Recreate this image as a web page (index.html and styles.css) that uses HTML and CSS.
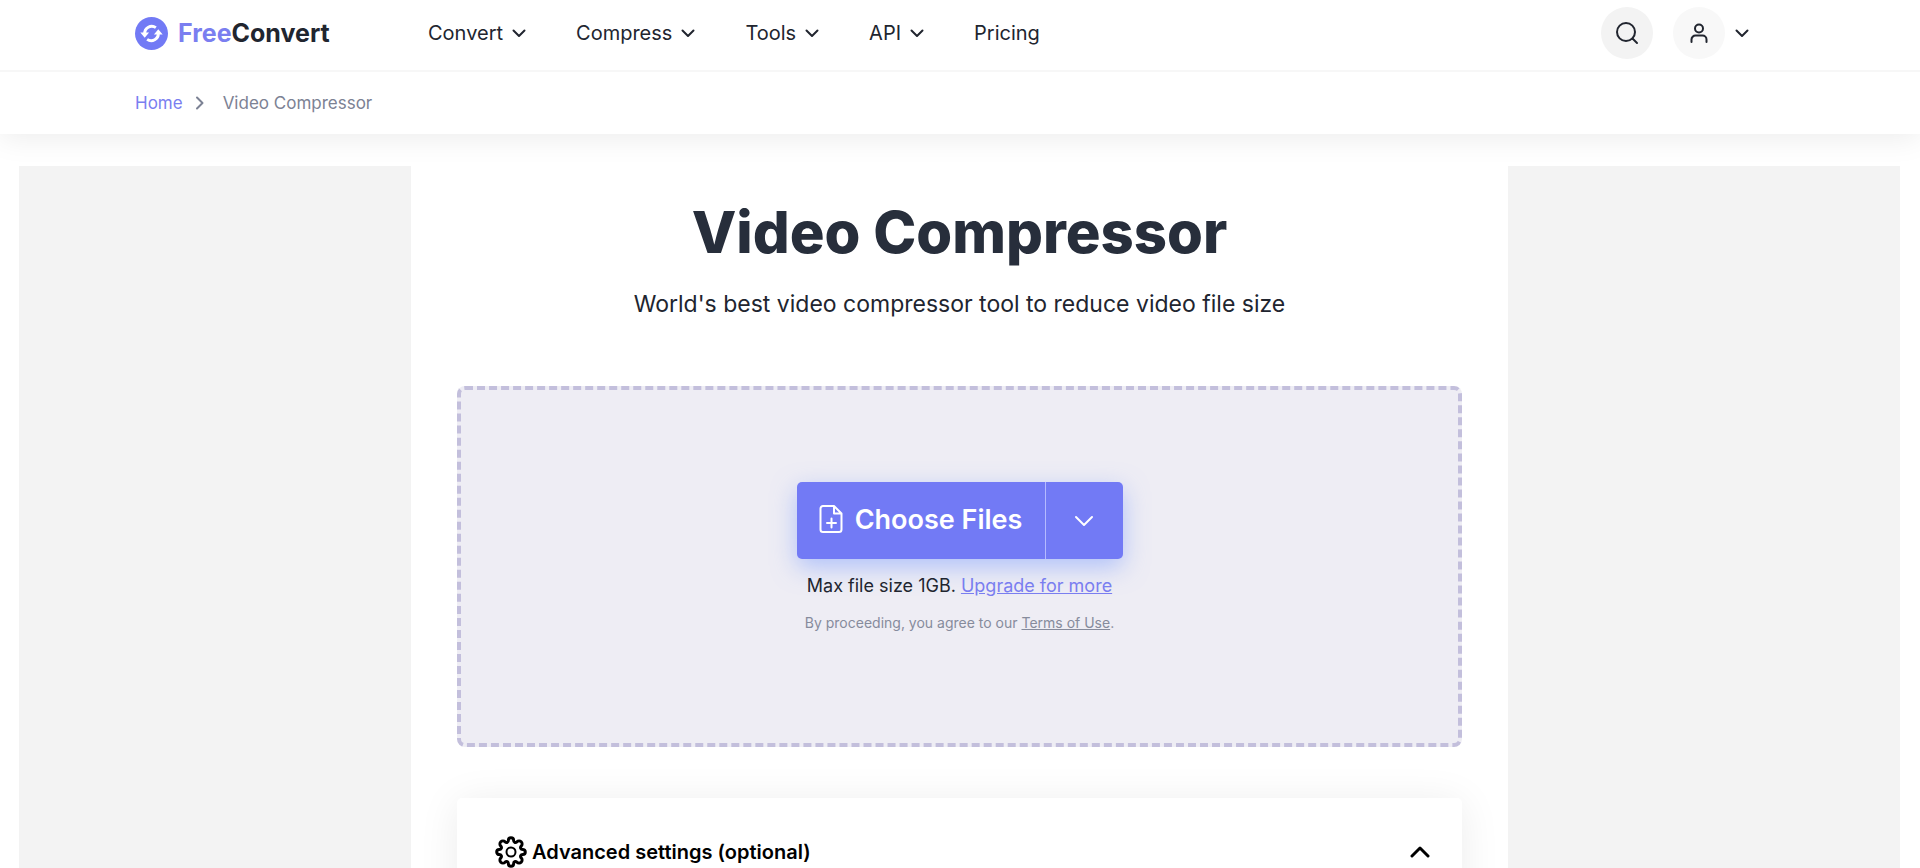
FILE: index.html
```html
<!DOCTYPE html>
<html lang="en">
<head>
    <meta charset="UTF-8">
    <meta name="viewport" content="width=device-width, initial-scale=1.0">
    <title>Video Compressor - FreeConvert</title>
    <link rel="stylesheet" href="styles.css">
</head>
<body>
    <header class="header">
        <a class="logo" href="#">
            <svg class="logo-mark" viewBox="0 0 34 34">
                <circle cx="17" cy="17" r="17" fill="#727af5"/>
                <path d="M10 17.500a7.300 7.300 0 0 1 11.500-6.500M24 16.500a7.300 7.300 0 0 1-11.500 6.500" fill="none" stroke="#fff" stroke-width="3"/>
                <path d="M5.500 16h9L10 21.500zM28.500 18h-9l4.500-5.500z" fill="#fff"/>
            </svg>
            <span class="logo-text"><span class="logo-free">Free</span>Convert</span>
        </a>
        <nav class="nav">
            <a href="#">Convert <svg class="chevron" viewBox="0 0 16 16"><path d="M2.500 5.500 8 11l5.500-5.500"/></svg></a>
            <a href="#">Compress <svg class="chevron" viewBox="0 0 16 16"><path d="M2.500 5.500 8 11l5.500-5.500"/></svg></a>
            <a href="#">Tools <svg class="chevron" viewBox="0 0 16 16"><path d="M2.500 5.500 8 11l5.500-5.500"/></svg></a>
            <a href="#">API <svg class="chevron" viewBox="0 0 16 16"><path d="M2.500 5.500 8 11l5.500-5.500"/></svg></a>
            <a href="#">Pricing</a>
        </nav>
        <div class="actions">
            <button class="round search" aria-label="Search">
                <svg viewBox="0 0 24 24"><circle cx="11" cy="11" r="9"/><path d="m17.500 17.500 4.500 4.500"/></svg>
            </button>
            <button class="account" aria-label="Account">
                <span class="round user">
                    <svg viewBox="0 0 24 24"><circle cx="12" cy="7.500" r="4"/><path d="M4.500 21v-2.500a4 4 0 0 1 4-4h7a4 4 0 0 1 4 4V21"/></svg>
                </span>
                <svg class="chevron" viewBox="0 0 16 16"><path d="M2.500 5.500 8 11l5.500-5.500"/></svg>
            </button>
        </div>
    </header>

    <nav class="breadcrumb" aria-label="Breadcrumb">
        <a href="#">Home</a>
        <svg class="crumb-arrow" viewBox="0 0 16 16"><path d="m5 2.500 5.500 5.500L5 13.500"/></svg>
        <span>Video Compressor</span>
    </nav>

    <div class="page">
        <aside class="ad"></aside>
        <main class="content">
            <h1>Video Compressor</h1>
            <p class="subtitle">World's best video compressor tool to reduce video file size</p>

            <section class="dropzone">
                <div class="choose">
                    <button class="choose-files">
                        <svg class="file-icon" viewBox="0 0 24 30"><path d="M15 2H4a2.500 2.500 0 0 0-2.500 2.500v21A2.500 2.500 0 0 0 4 28h16a2.500 2.500 0 0 0 2.500-2.500V9.500zM15 2v7.500h7.500M12.500 14.500v9M8 19h9"/></svg>
                        Choose Files
                    </button>
                    <button class="choose-more" aria-label="More sources">
                        <svg viewBox="0 0 20 20"><path d="m2 6 8 8 8-8"/></svg>
                    </button>
                </div>
                <p class="limit">Max file size 1GB. <a href="#">Upgrade for more</a></p>
                <p class="terms">By proceeding, you agree to our <a href="#">Terms of Use</a>.</p>
            </section>

            <section class="settings">
                <button class="settings-toggle">
                    <svg class="gear" viewBox="0 0 32 32">
                        <path d="M13.400 4.300a2.600 2.600 0 0 1 5.200 0c0 2 1.800 2.800 3.300 1.500a2.900 2.900 0 0 1 4.300 4.300c-1.300 1.500-.5 3.300 1.500 3.300a2.600 2.600 0 0 1 0 5.200c-2 0-2.800 1.800-1.500 3.300a2.900 2.900 0 0 1-4.300 4.300c-1.500-1.300-3.300-.5-3.300 1.500a2.600 2.600 0 0 1-5.200 0c0-2-1.800-2.800-3.300-1.500a2.900 2.900 0 0 1-4.300-4.300c1.300-1.500.5-3.300-1.500-3.300a2.600 2.600 0 0 1 0-5.200c2 0 2.800-1.800 1.500-3.300a2.900 2.900 0 0 1 4.300-4.300c1.500 1.300 3.300.5 3.300-1.500z"/>
                        <circle cx="16" cy="16" r="4.500"/>
                    </svg>
                    <span>Advanced settings (optional)</span>
                    <svg class="caret" viewBox="0 0 20 20"><path d="m2 14 8-8 8 8"/></svg>
                </button>
            </section>
        </main>
        <aside class="ad"></aside>
    </div>
</body>
</html>
```
FILE: styles.css
```css
* {
    box-sizing: border-box;
}
body {
    margin: 0;
    font-family: Inter, sans-serif;
    color: #21252f;
    background-color: #fff;
}
a {
    color: inherit;
    text-decoration: none;
}
button {
    padding: 0;
    border: none;
    background: none;
    color: inherit;
    font-family: inherit;
    cursor: pointer;
}
svg {
    display: block;
    flex: none;
    fill: none;
    stroke: currentColor;
    stroke-width: 2;
    stroke-linecap: round;
    stroke-linejoin: round;
}
.header {
    position: relative;
    z-index: 1;
    display: flex;
    align-items: center;
    height: 72px;
    padding: 0 170px 4px 135px;
    border-bottom: 2px solid #f7f7f7;
    background-color: #fff;
}
.logo {
    display: flex;
    align-items: center;
    gap: 10px;
    width: 293px;
    font-size: 25px;
    font-weight: 700;
}
.logo-mark {
    width: 33px;
    height: 33px;
    stroke: none;
    stroke-linecap: butt;
}
.logo-free {
    color: #7a7ef0;
}
.nav {
    display: flex;
    gap: 49px;
    font-size: 20px;
}
.nav a {
    display: flex;
    align-items: center;
    gap: 8px;
}
.chevron {
    width: 16px;
    height: 16px;
}
.actions {
    display: flex;
    gap: 20px;
    margin-left: auto;
}
.round {
    display: flex;
    align-items: center;
    justify-content: center;
    width: 52px;
    height: 52px;
    border-radius: 50%;
}
.search {
    background-color: #f3f3f3;
}
.search svg {
    width: 24px;
    height: 24px;
}
.account {
    display: flex;
    align-items: center;
    gap: 9px;
}
.user {
    background-color: #f8f8f8;
}
.user svg {
    width: 24px;
    height: 24px;
}
.breadcrumb {
    display: flex;
    align-items: center;
    height: 62px;
    padding: 0 135px;
    font-size: 17px;
    color: #7c8294;
    box-shadow: 0 4px 30px rgba(0, 0, 0, 0.08);
}
.breadcrumb a {
    color: #7a7ef0;
}
.crumb-arrow {
    width: 16px;
    height: 16px;
    margin: 0 15px 0 9px;
}
.page {
    display: flex;
    margin: 32px 20px 0 19px;
}
.ad {
    flex: none;
    width: 392px;
    background-color: #f3f3f3;
}
.content {
    flex: 1;
    padding: 0 46px;
    text-align: center;
}
h1 {
    margin: 30px 0 0;
    font-size: 58px;
    line-height: 72px;
    font-weight: 800;
    color: #272e3b;
}
.subtitle {
    margin: 20px 0 0;
    font-size: 23px;
    line-height: 32px;
}
.dropzone {
    display: flex;
    flex-direction: column;
    align-items: center;
    height: 361px;
    margin-top: 66px;
    padding-top: 92px;
    border: 4px dashed #c3bfdc;
    border-radius: 8px;
    background-color: #eeedf4;
}
.choose {
    display: flex;
    height: 77px;
    border-radius: 5px;
    background-color: #727af5;
    color: #fff;
    box-shadow: 0 8px 24px rgba(114, 150, 255, 0.5);
}
.choose-files {
    display: flex;
    align-items: center;
    justify-content: center;
    gap: 12px;
    width: 249px;
    padding-bottom: 3px;
    border-right: 1px solid #b5baff;
    font-size: 27px;
    font-weight: 600;
}
.file-icon {
    width: 24px;
    height: 30px;
}
.choose-more {
    display: flex;
    align-items: center;
    justify-content: center;
    width: 77px;
}
.choose-more svg {
    width: 20px;
    height: 20px;
}
.limit {
    margin: 15px 0 0;
    font-size: 18px;
    line-height: 24px;
}
.limit a {
    color: #7a7ef0;
    text-decoration: underline;
}
.terms {
    margin: 15px 0 0;
    font-size: 14px;
    line-height: 20px;
    color: #868b9c;
}
.terms a {
    text-decoration: underline;
}
.settings {
    margin-top: 51px;
    padding: 38px 32px 38px 38px;
    border-radius: 5px;
    background-color: #fff;
    box-shadow: 0 4px 40px rgba(0, 0, 0, 0.08);
}
.settings-toggle {
    display: flex;
    align-items: center;
    gap: 5px;
    width: 100%;
    font-size: 20px;
    font-weight: 600;
    color: #000;
}
.gear {
    width: 32px;
    height: 32px;
    stroke-width: 3;
}
.gear circle {
    stroke-width: 2;
}
.caret {
    width: 20px;
    height: 20px;
    margin-left: auto;
    stroke-width: 3;
}
```
